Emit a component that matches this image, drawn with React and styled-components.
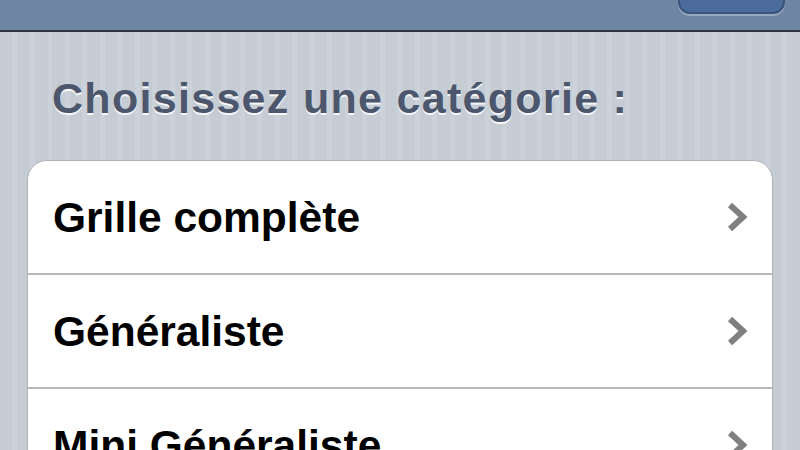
import styled, { createGlobalStyle } from 'styled-components';

const GlobalStyle = createGlobalStyle`
  html, body {
    margin: 0;
    padding: 0;
    height: 100%;
    overflow: hidden;
  }
  body {
    font-family: "Liberation Sans", Arial, Helvetica, sans-serif;
    background-color: #c5ccd4;
    background-image: repeating-linear-gradient(
      90deg,
      #c5ccd4 0px,
      #c5ccd4 12.5px,
      #cbd2d9 12.5px,
      #cbd2d9 17.5px
    );
  }
`;

const Screen = styled.div`
  display: flex;
  flex-direction: column;
  min-height: 450px;
`;

// only the bottom of the navigation bar is visible in the frame
const NavBar = styled.div`
  height: 110px;
  margin-top: -80px;
  display: flex;
  align-items: center;
  justify-content: flex-end;
  padding-right: 15px;
  background: #6e85a3;
  border-bottom: 2px solid #2d3642;
`;

const NavButton = styled.div`
  width: 107px;
  height: 75px;
  box-sizing: border-box;
  border-radius: 12px;
  background: #4a6b9c;
  border: 2px solid #3a547b;
  box-shadow: 0 2px 0 rgba(200, 212, 228, 0.45);
  margin-top: 2px;
`;

const Content = styled.div`
  display: flex;
  flex-direction: column;
  padding: 0 27px;
`;

const SectionTitle = styled.h2`
  margin: 41px 0 0 25px;
  height: 87px;
  font-size: 43px;
  line-height: 50px;
  letter-spacing: 1.3px;
  font-weight: bold;
  color: #4c566c;
  text-shadow: 0 2px 0 rgba(255, 255, 255, 0.85);
`;

const Card = styled.div`
  display: flex;
  flex-direction: column;
  background: #fff;
  border: 1px solid #aeb2b8;
  border-radius: 20px;
  overflow: hidden;
`;

const Row = styled.div`
  display: flex;
  align-items: center;
  justify-content: space-between;
  height: 112px;
  padding: 0 25px 0 25px;
  border-top: ${(p) => (p.$first ? 'none' : '2px solid #b9b9b9')};
`;

const Label = styled.span`
  font-size: 42.5px;
  font-weight: bold;
  color: #000;
  margin-top: 2px;
`;

const Chevron = () => (
  <svg width="20" height="30" viewBox="0 0 20 30">
    <path
      d="M3 3 L16 15 L3 27"
      fill="none"
      stroke="#7f7f7f"
      strokeWidth="6"
      strokeLinejoin="miter"
    />
  </svg>
);

const items = ['Grille complète', 'Généraliste', 'Mini Généraliste'];

export default function App() {
  return (
    <>
      <GlobalStyle />
      <Screen>
        <NavBar>
          <NavButton />
        </NavBar>
        <Content>
          <SectionTitle>Choisissez une catégorie :</SectionTitle>
          <Card>
            {items.map((it, i) => (
              <Row key={it} $first={i === 0}>
                <Label>{it}</Label>
                <Chevron />
              </Row>
            ))}
          </Card>
        </Content>
      </Screen>
    </>
  );
}
